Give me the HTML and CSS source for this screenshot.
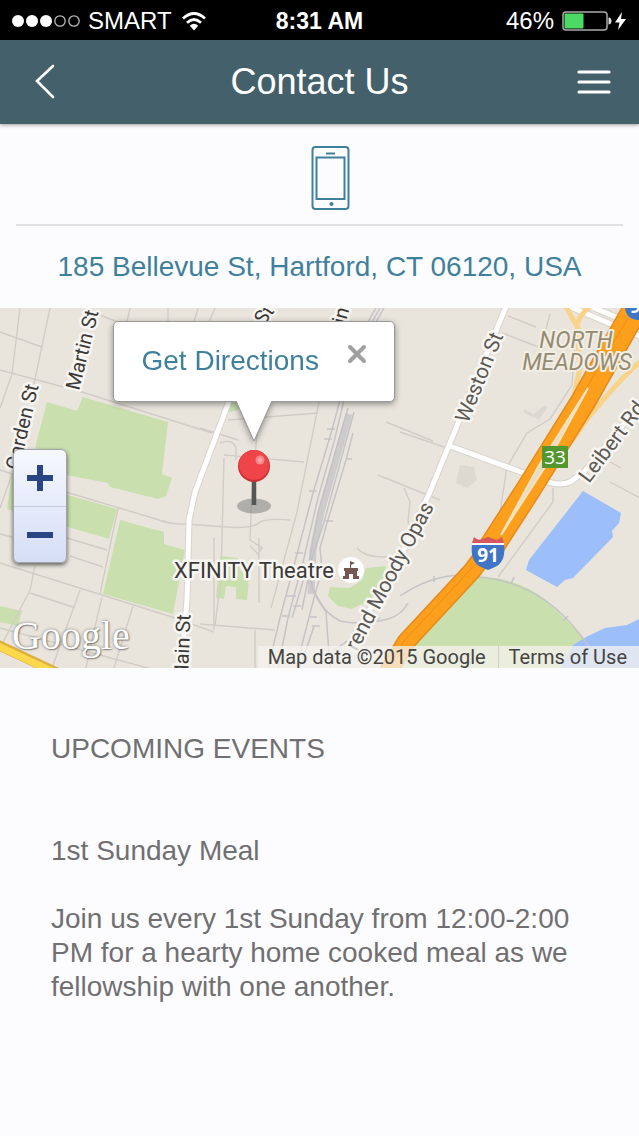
FILE: index.html
```html
<!DOCTYPE html>
<html lang="en">

<head>
  <meta charset="UTF-8">
  <meta name="viewport" content="width=device-width, initial-scale=1.0">
  <title>Contact Us</title>
  <link rel="stylesheet" href="styles.css">
</head>

<body>
  <div class="status-bar">
    <div class="status-left">
      <svg class="signal" width="68" height="14" viewBox="0 0 68 14">
        <g fill="#fff">
          <circle cx="6" cy="7" r="6" />
          <circle cx="20" cy="7" r="6" />
          <circle cx="34" cy="7" r="6" />
        </g>
        <g fill="none" stroke="#bbb" stroke-width="1.3">
          <circle cx="48" cy="7" r="5.2" />
          <circle cx="62" cy="7" r="5.2" />
        </g>
      </svg>
      <span>SMART</span>
      <svg class="wifi" width="24" height="19" viewBox="0 0 24 19">
        <g fill="none" stroke="#fff" stroke-width="2.7">
          <path d="M1 6.5Q12-3.5 23 6.5" />
          <path d="M5 10.7Q12 4.3 19 10.7" />
        </g>
        <path d="M7.8 13.7Q12 10 16.2 13.7L12 18.5z" fill="#fff" />
      </svg>
    </div>
    <div class="status-time">8:31 AM</div>
    <div class="status-right">
      <span>46%</span>
      <svg width="65" height="20" viewBox="0 0 65 20">
        <rect x="1" y="1" width="44" height="18" rx="3" fill="none" stroke="#aaa" stroke-width="1.5" />
        <rect x="2.5" y="2.5" width="19" height="15" rx="1" fill="#4cd964" />
        <path d="M46.500 6.500c4 0 4 7 0 7z" fill="#ddd" />
        <path d="M60 1L53 11.5h4.5L56 19l8-11h-5z" fill="#fff" />
      </svg>
    </div>
  </div>

  <header class="header">
    <a href="#" class="nav-button" aria-label="Back">
      <svg width="20" height="36" viewBox="0 0 20 36">
        <path d="M18 2L2 17l16 16" fill="none" stroke="#fff" stroke-width="2.6" stroke-linecap="round" />
      </svg>
    </a>
    <h1 class="title">Contact Us</h1>
    <button type="button" class="nav-button nav-menu" aria-label="Menu">
      <svg width="34" height="26" viewBox="0 0 34 26">
        <path d="M2 3h30M2 13h30M2 23h30" stroke="#fff" stroke-width="3.2" stroke-linecap="round" />
      </svg>
    </button>
  </header>

  <main>
    <div class="call">
      <a href="tel:" class="call-link" aria-label="Call">
        <svg width="40" height="64" viewBox="0 0 40 64">
          <g fill="none" stroke="#3f809c" stroke-width="2">
            <rect x="1.5" y="1" width="36" height="62" rx="3" />
            <rect x="5.5" y="11.5" width="28" height="41.5" />
            <path d="M15 7.5h9" />
          </g>
          <circle cx="20.5" cy="58" r="2" fill="#3f809c" />
        </svg>
      </a>
    </div>

    <a href="#map" class="address">185 Bellevue St, Hartford, CT 06120, USA</a>

    <div class="map" id="map">
      <svg class="map-canvas" viewBox="0 0 639 360" preserveAspectRatio="xMidYMid slice">
        <rect width="639" height="360" fill="#e9e5dd" />

        <!-- parks -->
        <g fill="#c9e0ae">
          <path d="M47 94l30 9 6-14 85 25-6 52 10 4-6 18-8 3-48-12-2-4-42-8-32-7 2-24z" />
          <path d="M12 165l56 22 49 14-8 30-41-12-61-18z" />
          <path d="M120 212l44 12v12l21 6-12 64-70-20z" />
          <path d="M0 298l22 5-4 15-18-4z" />
          <path d="M220 248l18 2 2 12 9 8-2 22-11-1v-12l-10-1-2 13-8-1 2-22z" />
          <path d="M366 260l20-2-3 17-13 17-18 9-14-3-10-10 2-9 20 1 12-8z" />
          <path d="M229 90h14l-5 12-11 3zM295 90h18l-12 4z" />
          <path d="M470 269Q515 267 546 292L590 336V360H396z" />
        </g>
        <path d="M460 157l14 2 3 13-10 8-11-5z" fill="#dcd9d1" />
        <path d="M524 101l10 5 10-9 4 2-9 13-15-7z" fill="#ddd9d2" />

        <!-- water -->
        <g fill="#9cbffb">
          <path d="M583 183l38 22-2 10-7 8 1 6-40 41-8 2-8 7-31-17 3-10z" />
          <path d="M639 311l-12 6-22 3-19 9-13 8-13 23h79z" />
        </g>

        <!-- minor streets -->
        <g fill="none" stroke="#d1cdc6" stroke-width="1.4">
          <path d="M20 0L12 66 0 100M50 0L34 76M0 24l42 15M0 62l82 22 130 41M95 5l25 10M130 0l-3 14M168 0v14M198 0l-4 14M215 0l-6 14" />
          <path d="M0 162l12 4M12 166L0 200M66 184l90 27q16 6 30 5l40 3q28 2 34-5 6-4 30-2M118 200L100 286M67 230l40 12M70 248l33 11M0 226l12 3M0 255l172 54 42 15M35 258L30 282 0 340M30 285l43 14M80 282L52 360M102 289l-8 34-8 37M133 298l-19 62M0 320l170 46M214 230v92" />
          <path d="M228 112l90-7M319 94l-22 110-26 96M224 147l80 7M224 150l-3 120-6 48M260 92l-8 90-2 50 12 8-4 6-8-8M200 120l38 12M220 135q12-5 16 5v12M259 230v65M200 316l75 6M255 322v38" />
          <path d="M386 114l47 19M378 167l62 25M404 180l6 14-2 20 8 14M508 8l28 11M502 25l42 16M550 6l-6 22M575 35l-3 42-22 34-23 14-20 34-7 45q-12 14-6 32M553 180v14l-55 75M610 154l11 6M400 124l50 17M640 190l-30-16M357 240q10 12 40 8" />
        </g>

        <!-- railway -->
        <g fill="none" stroke="#c5c4c6" stroke-width="1.5">
          <path d="M376 0l-8 14M380 0l-8 14M384 0l-8 14" />
          <path d="M340 92l-8 30-19 63-17 65-16 60-12 50" />
          <path d="M344 92l-10 42-16 56-14 60-16 60-10 50" />
          <path d="M348 100l-30 105-8 45-18 60M354 104l-30 110-12 36-10 52" />
          <path d="M353 125l-7 27-19 63-7 25 2 22" />
          <path d="M322 262l-8 28-18 70M310 250l2 30 14 24 4 56M314 318l-14 42" />
          <path d="M310 270q6 30 30 43 22 5 48-2 14-4 20-16M330 345l50-35" />
          <path d="M327 121h8M324 131h8M309 183h8M346 151h6M311 183h6M325 213h8M295 245h8M286 288h10M282 308h8M293 298h8M310 309h7M312 318h8" />
          <path d="M400 288q40-27 80-19 60 6 98 55l20 26M434 268v6M514 269l-3 7M568 308l-5 5" />
        </g>
        <path d="M349 106l-28 98-8 38-2 44" fill="none" stroke="#c2c1c5" stroke-width="7" opacity=".7" />

        <!-- main streets -->
        <g fill="none" stroke="#d8d4cd" stroke-width="7">
          <path d="M234 80l-39 104-6 28-2 80-6 68" />
          <path d="M507-4l-78 190-30 66-50 85" />
          <path d="M450 138l90 33q18 8 30 3l14-10 62-75" />
          <path d="M554-8l90 38M570-10l75 31" />
        </g>
        <g fill="none" stroke="#fff" stroke-width="5">
          <path d="M234 80l-39 104-6 28-2 80-6 68" />
          <path d="M507-4l-78 190-30 66-50 85" />
          <path d="M450 138l90 33q18 8 30 3l14-10 62-75" />
          <path d="M554-8l90 38M570-10l75 31" />
        </g>
        <path d="M-4 336l64 30" stroke="#ddb13f" stroke-width="10" />
        <path d="M-4 337l64 30" stroke="#ffd84c" stroke-width="7" />

        <!-- freeway -->
        <g fill="none" stroke="#f9d389" stroke-width="5">
          <path d="M592-3q-14 10-15 22l3 40-10 49M565-3l14 25M645 50q-20 14-60 64l-14 20" />
        </g>
        <g fill="none" stroke="#e58b1c">
          <path d="M637-2L584 92 528 182 490 241" stroke-width="26" />
          <path d="M498 228l-26 35-66 71-18 30" stroke-width="19" />
        </g>
        <g fill="none" stroke="#fc9f1d">
          <path d="M637-2L584 92 528 182 490 241" stroke-width="23" />
          <path d="M498 228l-26 35-66 71-18 30" stroke-width="16" />
        </g>
        <path d="M484 247l-14 15-66 71-18 30M634 0l-50 84" fill="none" stroke="#eb8d14" stroke-width="1" />
        <path d="M588 80l-50 79-37 68 44-68z" fill="#e5ddc9" stroke="#f6e3bd" stroke-width="2" />

        <!-- labels -->
        <g class="map-label">
          <text transform="translate(79 83) rotate(-76)">Martin St</text>
          <text transform="translate(19 163) rotate(-77)">Garden St</text>
          <text transform="translate(188 374) rotate(-88)">Main St</text>
          <text transform="translate(264 18) rotate(-54)">St</text>
          <text transform="translate(342 29) rotate(-75)">Vine</text>
          <text class="dim" transform="translate(468 116) rotate(-68)">Weston St</text>
          <text class="dim" transform="translate(589 176) rotate(-53)">Leibert Rd</text>
          <text class="dim" transform="translate(357 344) rotate(-62)">rend Moody Opas</text>
          <text class="poi" x="174" y="270">XFINITY Theatre</text>
        </g>
        <g class="map-area" text-anchor="middle">
          <text x="576" y="40">NORTH</text>
          <text x="577" y="62">MEADOWS</text>
        </g>

        <!-- theatre marker -->
        <circle cx="351" cy="262" r="13" fill="#fff" />
        <path d="M350 253l5 2-4 2v3h7v3h-1v5h2v3h-6v-5h-4v5h-6v-3h2v-5h-1v-3h6z" fill="#735750" />

        <!-- exit and route signs -->
        <rect x="542" y="138" width="26" height="22" fill="#55972f" />
        <text class="sign" x="555" y="156" text-anchor="middle">33</text>
        <path d="M472 236h32q2 16-7 22-4 2-9 4-5-2-9-4-9-6-7-22z" fill="#3f75c6" />
        <path d="M474 229q4 4 8 2 3-1 6-2 3 1 6 2 4 2 8-2l2 6h-32z" fill="#d6585d" />
        <path d="M472 236h32" stroke="#fff" stroke-width="2" />
        <text class="sign bold" x="488" y="254" text-anchor="middle">91</text>
        <circle cx="638" cy="-1" r="13" fill="#3f75c6" />
        <text class="sign bold" x="630" y="5">9</text>
      </svg>

      <div class="zoom">
        <button type="button" class="zoom-button" aria-label="Zoom in">
          <svg width="26" height="26" viewBox="0 0 26 26">
            <path d="M13 0v26M0 13h26" stroke="#2a4584" stroke-width="6" />
          </svg>
        </button>
        <button type="button" class="zoom-button" aria-label="Zoom out">
          <svg width="26" height="26" viewBox="0 0 26 26">
            <path d="M0 13h26" stroke="#2a4584" stroke-width="6" />
          </svg>
        </button>
      </div>

      <div class="bubble">
        <a href="#directions" class="bubble-link">Get Directions</a>
        <button type="button" class="bubble-close" aria-label="Close">
          <svg width="20" height="20" viewBox="0 0 20 20">
            <path d="M3 3l14 14M17 3L3 17" stroke="#a0a0a0" stroke-width="4" stroke-linecap="round" />
          </svg>
        </button>
        <svg class="bubble-tail" width="38" height="42" viewBox="0 0 38 42">
          <path d="M1 0h36L19 41z" fill="#fff" />
          <path d="M1 1l18 40L37 1" fill="none" stroke="#999" stroke-width="1" />
        </svg>
      </div>

      <svg class="pin" width="36" height="68" viewBox="0 0 36 68">
        <ellipse cx="18" cy="58" rx="17" ry="7.500" fill="#777" opacity=".5" />
        <path d="M18 30v27" stroke="#555" stroke-width="4.500" />
        <circle cx="18" cy="18" r="16" fill="#cb2f35" />
        <circle cx="18" cy="17" r="15" fill="#ef4448" />
        <circle cx="24" cy="12" r="4.500" fill="#f8898b" />
        <circle cx="24" cy="12" r="2" fill="#fba9a9" />
      </svg>

      <span class="map-logo">Google</span>
      <div class="map-credits">
        <span>Map data ©2015 Google</span>
        <a href="#terms">Terms of Use</a>
      </div>
    </div>

    <section class="events">
      <h2 class="events-title">UPCOMING EVENTS</h2>
      <h3 class="event-name">1st Sunday Meal</h3>
      <p>Join us every 1st Sunday from 12:00-2:00 PM for a hearty home cooked meal as we fellowship with one another.</p>
    </section>
  </main>
</body>

</html>
```

FILE: styles.css
```css
* {
  margin: 0;
  padding: 0;
  box-sizing: border-box;
}

body {
  background: #fcfcfe;
  color: #707072;
  font-family: "Liberation Sans", Arial, sans-serif;
  font-size: 28px;
  line-height: 34px;
}

a {
  color: #3f809c;
  text-decoration: none;
}

button {
  border: none;
  background: none;
  cursor: pointer;
}

svg {
  display: block;
}

/* Status bar */
.status-bar {
  display: grid;
  grid-template-columns: 1fr auto 1fr;
  align-items: center;
  height: 40px;
  padding: 2px 12px 0;
  background: #000;
  color: #fff;
  font-size: 24px;
}

.status-left,
.status-right {
  display: flex;
  align-items: center;
  gap: 8px;
}

.status-left .wifi {
  margin-left: 2px;
}

.status-right {
  justify-content: flex-end;
}

.status-time {
  font-size: 23px;
  font-weight: bold;
}

/* Header */
.header {
  position: relative;
  display: grid;
  grid-template-columns: 90px 1fr 90px;
  height: 84px;
  background: #43606b;
  box-shadow: 0 1px 4px rgba(0, 0, 0, 0.4);
}

.nav-button {
  display: flex;
  align-items: center;
  justify-content: center;
}

.title {
  color: #fff;
  font-size: 36px;
  font-weight: normal;
  line-height: 84px;
  text-align: center;
}

/* Contact rows */
.call {
  margin: 0 16px;
  padding: 22px 0 14px;
  border-bottom: 2px solid #e1e1e3;
}

.call-link {
  display: flex;
  justify-content: center;
  padding-left: 22px;
}

.address {
  display: block;
  padding: 24px 16px;
  text-align: center;
}

/* Map */
.map {
  position: relative;
  height: 360px;
  overflow: hidden;
  font-family: Roboto, sans-serif;
}

.map-canvas {
  width: 100%;
  height: 100%;
}

.map-label {
  fill: #3c3a38;
  font-size: 20px;
  stroke: #f8f6f2;
  stroke-width: 5px;
  stroke-linejoin: round;
  paint-order: stroke;
}

.map-label .dim {
  fill: #5c5955;
  font-size: 21px;
}

.map-label .poi {
  font-size: 22px;
}

.map-area {
  fill: #948b74;
  font-size: 23px;
  font-style: italic;
  stroke: #f3eee2;
  stroke-width: 4px;
  stroke-linejoin: round;
  paint-order: stroke;
}

.sign {
  fill: #fff;
  font-family: "Open Sans", sans-serif;
  font-size: 19px;
}

.sign.bold {
  font-weight: bold;
}

.zoom {
  position: absolute;
  top: 141px;
  left: 13px;
  width: 54px;
  border-radius: 6px;
  overflow: hidden;
  border: 1px solid #a3a4ac;
  background: linear-gradient(#f6f8fe, #d5def6);
  box-shadow: 0 2px 4px rgba(0, 0, 0, 0.6);
}

.zoom-button {
  display: flex;
  align-items: center;
  justify-content: center;
  width: 100%;
  height: 56px;
}

.zoom-button + .zoom-button {
  border-top: 1px solid #c3cbe0;
}

.bubble {
  position: absolute;
  top: 13px;
  left: calc(50% - 207px);
  display: flex;
  gap: 28px;
  width: 282px;
  height: 81px;
  padding: 22px 0 0 28px;
  background: #fff;
  border: 1px solid #999;
  border-radius: 5px;
  font-family: "Liberation Sans", Arial, sans-serif;
  filter: drop-shadow(0 2px 3px rgba(0, 0, 0, 0.4));
}

.bubble-close {
  height: 20px;
}

.bubble-tail {
  position: absolute;
  top: 78px;
  left: 121px;
}

.pin {
  position: absolute;
  top: 140px;
  left: calc(50% - 84px);
}

.map-logo {
  position: absolute;
  left: 12px;
  bottom: 8px;
  color: #fff;
  font-family: "Liberation Serif", serif;
  font-size: 40px;
  line-height: 48px;
  text-shadow: 0 0 3px rgba(0, 0, 0, 0.5), 1px 1px 1px rgba(0, 0, 0, 0.3);
}

.map-credits {
  position: absolute;
  right: 0;
  bottom: 0;
  display: flex;
  background: rgba(245, 243, 239, 0.75);
  font-size: 20px;
  line-height: 22px;
}

.map-credits span,
.map-credits a {
  padding: 0 12px 0 10px;
  color: #444;
}

.map-credits a {
  border-left: 1px solid #d0d0c8;
}

/* Events */
.events {
  padding: 64px 51px;
}

.events-title,
.event-name {
  font-size: 28px;
  font-weight: normal;
}

.event-name {
  margin: 68px 0 34px;
}
```
